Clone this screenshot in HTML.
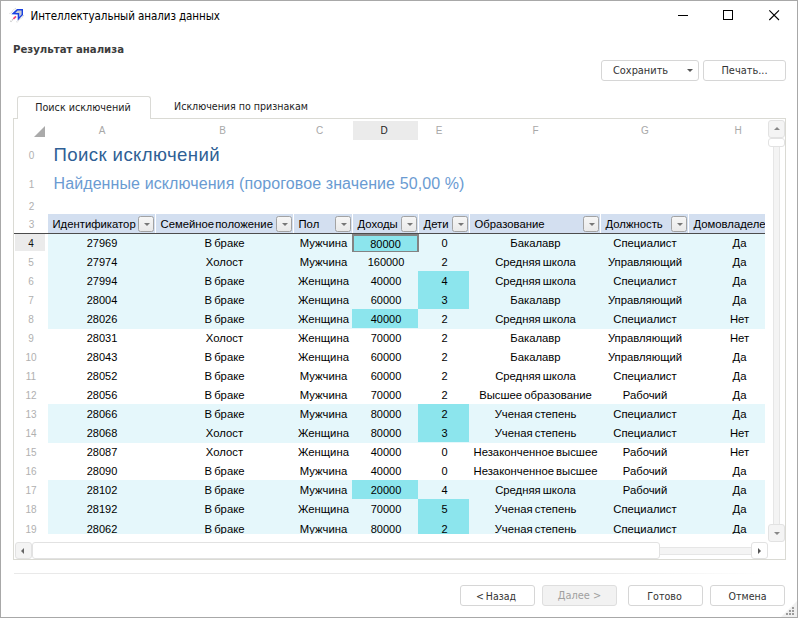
<!DOCTYPE html>
<html lang="ru"><head><meta charset="utf-8"><title>Интеллектуальный анализ данных</title>
<style>
*{box-sizing:border-box;margin:0;padding:0}
html,body{width:798px;height:618px;overflow:hidden;background:#fff}
body{font-family:"DejaVu Sans Condensed","Liberation Sans",sans-serif;font-size:11px;color:#222;position:relative}
#win{position:absolute;left:0;top:0;width:798px;height:618px;background:#fff}
#frame{position:absolute;left:0;top:0;width:798px;height:618px;border:1px solid #a8a8a8;z-index:10;pointer-events:none}
.abs{position:absolute}
#title{left:30.500px;top:9px;font-size:11.500px;letter-spacing:-0.080px;line-height:14px;color:#000;white-space:nowrap}
#sub{left:13px;top:43px;font-weight:bold;font-size:11.300px;color:#3c3c3c;white-space:nowrap}
.btn{position:absolute;height:21px;border:1px solid #d6d6d6;border-radius:3px;background:#fff;text-align:center;line-height:20.500px;font-size:10.900px;color:#333;white-space:nowrap}
.btn.dis{background:#f2f2f2;color:#a0a0a0;border-color:#dedede}
#tab1{left:17px;top:96px;width:134px;height:23px;border:1px solid #dadad6;border-bottom:none;border-radius:3px 3px 0 0;background:#fff;text-align:center;line-height:21px;z-index:3;font-size:10.700px;padding-right:2px}
#tab2{left:152px;top:96px;width:178px;height:22px;text-align:center;line-height:21px;font-size:10.550px}
#grid{left:13px;top:118px;width:773px;height:442px;border:1px solid #dadad4;background:#fff;overflow:hidden;font-family:"Liberation Sans",sans-serif}
#cells{position:absolute;left:0;top:0;width:751px;height:415px;overflow:hidden}
.ch{position:absolute;top:2px;height:19px;line-height:19px;text-align:center;color:#a8a8a8;font-size:10px}
.ch.dsel{background:#ebebeb;color:#222}
.rn{position:absolute;left:2px;width:31px;line-height:12px;text-align:center;color:#b0b0b0;font-size:10px}
.rw{position:absolute;left:0;width:751px;height:19px;line-height:21px;font-size:11px;color:#000}
.rw.hl::before{content:"";position:absolute;left:34px;right:0;top:0;bottom:-1px;background:#e5f7fb}
.rh{position:absolute;left:1px;width:30px;top:1px;height:17px;line-height:19px;padding-left:2px;text-align:center;color:#b0b0b0;font-size:10px}
.rh.sel{background:#ebebeb;color:#111}
.c{position:absolute;top:0;height:19px;text-align:center;white-space:nowrap;overflow:hidden}
.c.t{font-size:11.300px;word-spacing:-1px}
.c.b{padding-right:1px}
.c.h{padding-left:3px}
.c.st{background:#8ce5ed}
.c.cur{border:2px solid #838383;line-height:17px;top:1px}
.hc{position:absolute;top:95px;height:19px;line-height:21px;background:#d3dff0;font-size:11.300px;color:#000;white-space:nowrap;overflow:hidden;padding-left:4.500px;word-spacing:-2px}
.dd{position:absolute;right:1px;top:2px;width:16px;height:16px;border:1px solid #a3a3a3;border-radius:2.500px;background:linear-gradient(#f6f6f6,#e9e9e9)}
.dd::after{content:"";position:absolute;left:4.500px;top:6px;border:3px solid transparent;border-top:3.500px solid #777;border-bottom:none}
#t0{left:39.500px;top:24px;font-size:18.600px;letter-spacing:0.400px;line-height:24px;color:#2f5f95;white-space:nowrap}
#t1{left:39.500px;top:55px;font-size:16px;letter-spacing:0.100px;line-height:20px;color:#6a9bd2;white-space:nowrap}
.sb{position:absolute;border:1px solid #e2e2e2;border-radius:3px;background:#fff}
.sb.g{background:#f4f4f4}
.trk{position:absolute;background:#f4f4f4;border:1px solid #e6e6e6}
</style></head><body>
<div id="win"><div id="frame"></div>
<svg class="abs" style="left:8px;top:6px" width="18" height="18" viewBox="8 6 18 18"><path d="M11.300 14.300 L17 9 L23 9 L23 15 L17.700 20.700 L17.700 14.600 Z" fill="#1840e0"/><path d="M17.600 10.500 L21.600 10.500 L21.600 14.500 L19.200 17 L19.200 13 L15.200 13 Z" fill="#c9ccd6"/><path d="M16 16.300 L13.400 18.900" stroke="#ee3f78" stroke-width="1.700" fill="none"/><path d="M13 19.300 L10.300 22" stroke="#c4c4c4" stroke-width="1.400" stroke-dasharray="1.300 0.900" fill="none"/><path d="M9.600 13.800 L15.800 8.200 M16.600 22.200 L23.800 15.300" stroke="#d4d4d4" stroke-width="1.200" stroke-dasharray="1 0.800" fill="none"/></svg>
<div id="title" class="abs">Интеллектуальный анализ данных</div>
<svg class="abs" style="left:670px;top:5px" width="120" height="20" viewBox="670 5 120 20"><path d="M678 15.500H688" stroke="#000" stroke-width="1" fill="none"/><rect x="723.500" y="10.500" width="9" height="9" stroke="#000" fill="none"/><path d="M769.300 10.300 L779 20 M779 10.300 L769.300 20" stroke="#000" stroke-width="1.100" fill="none"/></svg>
<div id="sub" class="abs">Результат анализа</div>
<div class="btn" style="left:601px;top:60px;width:98px;text-align:left;padding-left:11px">Сохранить<i class="abs" style="right:5.500px;top:8px;border:3px solid transparent;border-top:3.500px solid #555;border-bottom:none"></i></div>
<div class="btn" style="left:703px;top:60px;width:83px">Печать...</div>
<div id="tab1" class="abs">Поиск исключений</div>
<div id="tab2" class="abs">Исключения по признакам</div>
<div id="grid" class="abs">
<div id="cells">
<svg class="abs" style="left:20px;top:7px" width="12" height="12"><path d="M0 11 L11 0 L11 11 Z" fill="#aaaaaa"/></svg>
<span class="ch" style="left:34px;width:108px">A</span><span class="ch" style="left:142px;width:138px;padding-right:5px">B</span><span class="ch" style="left:280px;width:59px;padding-right:8px">C</span><span class="ch dsel" style="left:339px;width:65px;padding-right:3px">D</span><span class="ch" style="left:405px;width:51px;padding-right:11px">E</span><span class="ch" style="left:456px;width:131px">F</span><span class="ch" style="left:587px;width:88px">G</span><span class="ch" style="left:675px;width:98px">H</span>
<span class="rn" style="top:31px">0</span>
<span class="rn" style="top:60px">1</span>
<span class="rn" style="top:82px">2</span>
<span class="rn" style="top:100px">3</span>
<div id="t0" class="abs">Поиск исключений</div>
<div id="t1" class="abs">Найденные исключения (пороговое значение 50,00 %)</div>
<span class="hc" style="left:34px;width:107px">Идентификатор<i class="dd"></i></span><span class="hc" style="left:142px;width:137px">Семейное положение<i class="dd"></i></span><span class="hc" style="left:280px;width:58px">Пол<i class="dd"></i></span><span class="hc" style="left:339px;width:65px">Доходы<i class="dd"></i></span><span class="hc" style="left:405px;width:50px">Дети<i class="dd"></i></span><span class="hc" style="left:456px;width:130px">Образование<i class="dd"></i></span><span class="hc" style="left:587px;width:87px">Должность<i class="dd"></i></span><span class="hc" style="left:675px;width:98px">Домовладелец</span>
<div class="rw hl" style="top:114px">
<span class="rh sel">4</span>
<span class="c" style="left:34px;width:108px">27969</span>
<span class="c t b" style="left:142px;width:138px">В браке</span>
<span class="c t" style="left:280px;width:59px">Мужчина</span>
<span class="c st cur" style="left:338px;width:67px">80000</span>
<span class="c" style="left:405px;width:51px">0</span>
<span class="c t" style="left:456px;width:131px">Бакалавр</span>
<span class="c t" style="left:587px;width:88px">Специалист</span>
<span class="c t h" style="left:675px;width:98px">Да</span>
</div>
<div class="rw hl" style="top:133px">
<span class="rh">5</span>
<span class="c" style="left:34px;width:108px">27974</span>
<span class="c t b" style="left:142px;width:138px">Холост</span>
<span class="c t" style="left:280px;width:59px">Мужчина</span>
<span class="c" style="left:339px;width:66px">160000</span>
<span class="c" style="left:405px;width:51px">2</span>
<span class="c t" style="left:456px;width:131px">Средняя школа</span>
<span class="c t" style="left:587px;width:88px">Управляющий</span>
<span class="c t h" style="left:675px;width:98px">Да</span>
</div>
<div class="rw hl" style="top:152px">
<span class="rh">6</span>
<span class="c" style="left:34px;width:108px">27994</span>
<span class="c t b" style="left:142px;width:138px">В браке</span>
<span class="c t" style="left:280px;width:59px">Женщина</span>
<span class="c" style="left:339px;width:66px">40000</span>
<span class="c st" style="left:404px;width:51px;padding-left:2px">4</span>
<span class="c t" style="left:456px;width:131px">Средняя школа</span>
<span class="c t" style="left:587px;width:88px">Специалист</span>
<span class="c t h" style="left:675px;width:98px">Да</span>
</div>
<div class="rw hl" style="top:171px">
<span class="rh">7</span>
<span class="c" style="left:34px;width:108px">28004</span>
<span class="c t b" style="left:142px;width:138px">В браке</span>
<span class="c t" style="left:280px;width:59px">Женщина</span>
<span class="c" style="left:339px;width:66px">60000</span>
<span class="c st" style="left:404px;width:51px;padding-left:2px">3</span>
<span class="c t" style="left:456px;width:131px">Бакалавр</span>
<span class="c t" style="left:587px;width:88px">Управляющий</span>
<span class="c t h" style="left:675px;width:98px">Да</span>
</div>
<div class="rw hl" style="top:190px">
<span class="rh">8</span>
<span class="c" style="left:34px;width:108px">28026</span>
<span class="c t b" style="left:142px;width:138px">В браке</span>
<span class="c t" style="left:280px;width:59px">Женщина</span>
<span class="c st" style="left:338px;width:66px;padding-left:2px">40000</span>
<span class="c" style="left:405px;width:51px">2</span>
<span class="c t" style="left:456px;width:131px">Средняя школа</span>
<span class="c t" style="left:587px;width:88px">Специалист</span>
<span class="c t h" style="left:675px;width:98px">Нет</span>
</div>
<div class="rw" style="top:209px">
<span class="rh">9</span>
<span class="c" style="left:34px;width:108px">28031</span>
<span class="c t b" style="left:142px;width:138px">Холост</span>
<span class="c t" style="left:280px;width:59px">Женщина</span>
<span class="c" style="left:339px;width:66px">70000</span>
<span class="c" style="left:405px;width:51px">2</span>
<span class="c t" style="left:456px;width:131px">Бакалавр</span>
<span class="c t" style="left:587px;width:88px">Управляющий</span>
<span class="c t h" style="left:675px;width:98px">Нет</span>
</div>
<div class="rw" style="top:228px">
<span class="rh">10</span>
<span class="c" style="left:34px;width:108px">28043</span>
<span class="c t b" style="left:142px;width:138px">В браке</span>
<span class="c t" style="left:280px;width:59px">Женщина</span>
<span class="c" style="left:339px;width:66px">60000</span>
<span class="c" style="left:405px;width:51px">2</span>
<span class="c t" style="left:456px;width:131px">Бакалавр</span>
<span class="c t" style="left:587px;width:88px">Управляющий</span>
<span class="c t h" style="left:675px;width:98px">Да</span>
</div>
<div class="rw" style="top:247px">
<span class="rh">11</span>
<span class="c" style="left:34px;width:108px">28052</span>
<span class="c t b" style="left:142px;width:138px">В браке</span>
<span class="c t" style="left:280px;width:59px">Мужчина</span>
<span class="c" style="left:339px;width:66px">60000</span>
<span class="c" style="left:405px;width:51px">2</span>
<span class="c t" style="left:456px;width:131px">Средняя школа</span>
<span class="c t" style="left:587px;width:88px">Специалист</span>
<span class="c t h" style="left:675px;width:98px">Да</span>
</div>
<div class="rw" style="top:266px">
<span class="rh">12</span>
<span class="c" style="left:34px;width:108px">28056</span>
<span class="c t b" style="left:142px;width:138px">В браке</span>
<span class="c t" style="left:280px;width:59px">Мужчина</span>
<span class="c" style="left:339px;width:66px">70000</span>
<span class="c" style="left:405px;width:51px">2</span>
<span class="c t" style="left:456px;width:131px">Высшее образование</span>
<span class="c t" style="left:587px;width:88px">Рабочий</span>
<span class="c t h" style="left:675px;width:98px">Да</span>
</div>
<div class="rw hl" style="top:285px">
<span class="rh">13</span>
<span class="c" style="left:34px;width:108px">28066</span>
<span class="c t b" style="left:142px;width:138px">В браке</span>
<span class="c t" style="left:280px;width:59px">Мужчина</span>
<span class="c" style="left:339px;width:66px">80000</span>
<span class="c st" style="left:404px;width:51px;padding-left:2px">2</span>
<span class="c t" style="left:456px;width:131px">Ученая степень</span>
<span class="c t" style="left:587px;width:88px">Специалист</span>
<span class="c t h" style="left:675px;width:98px">Да</span>
</div>
<div class="rw hl" style="top:304px">
<span class="rh">14</span>
<span class="c" style="left:34px;width:108px">28068</span>
<span class="c t b" style="left:142px;width:138px">Холост</span>
<span class="c t" style="left:280px;width:59px">Женщина</span>
<span class="c" style="left:339px;width:66px">80000</span>
<span class="c st" style="left:404px;width:51px;padding-left:2px">3</span>
<span class="c t" style="left:456px;width:131px">Ученая степень</span>
<span class="c t" style="left:587px;width:88px">Специалист</span>
<span class="c t h" style="left:675px;width:98px">Нет</span>
</div>
<div class="rw" style="top:323px">
<span class="rh">15</span>
<span class="c" style="left:34px;width:108px">28087</span>
<span class="c t b" style="left:142px;width:138px">Холост</span>
<span class="c t" style="left:280px;width:59px">Женщина</span>
<span class="c" style="left:339px;width:66px">40000</span>
<span class="c" style="left:405px;width:51px">0</span>
<span class="c t" style="left:456px;width:131px">Незаконченное высшее</span>
<span class="c t" style="left:587px;width:88px">Рабочий</span>
<span class="c t h" style="left:675px;width:98px">Нет</span>
</div>
<div class="rw" style="top:342px">
<span class="rh">16</span>
<span class="c" style="left:34px;width:108px">28090</span>
<span class="c t b" style="left:142px;width:138px">В браке</span>
<span class="c t" style="left:280px;width:59px">Мужчина</span>
<span class="c" style="left:339px;width:66px">40000</span>
<span class="c" style="left:405px;width:51px">0</span>
<span class="c t" style="left:456px;width:131px">Незаконченное высшее</span>
<span class="c t" style="left:587px;width:88px">Рабочий</span>
<span class="c t h" style="left:675px;width:98px">Да</span>
</div>
<div class="rw hl" style="top:361px">
<span class="rh">17</span>
<span class="c" style="left:34px;width:108px">28102</span>
<span class="c t b" style="left:142px;width:138px">В браке</span>
<span class="c t" style="left:280px;width:59px">Мужчина</span>
<span class="c st" style="left:338px;width:66px;padding-left:2px">20000</span>
<span class="c" style="left:405px;width:51px">4</span>
<span class="c t" style="left:456px;width:131px">Средняя школа</span>
<span class="c t" style="left:587px;width:88px">Рабочий</span>
<span class="c t h" style="left:675px;width:98px">Да</span>
</div>
<div class="rw hl" style="top:380px">
<span class="rh">18</span>
<span class="c" style="left:34px;width:108px">28192</span>
<span class="c t b" style="left:142px;width:138px">В браке</span>
<span class="c t" style="left:280px;width:59px">Женщина</span>
<span class="c" style="left:339px;width:66px">70000</span>
<span class="c st" style="left:404px;width:51px;padding-left:2px">5</span>
<span class="c t" style="left:456px;width:131px">Ученая степень</span>
<span class="c t" style="left:587px;width:88px">Специалист</span>
<span class="c t h" style="left:675px;width:98px">Да</span>
</div>
<div class="rw hl" style="top:399px;line-height:23px">
<span class="rh" style="line-height:21px">19</span>
<span class="c" style="left:34px;width:108px">28062</span>
<span class="c t b" style="left:142px;width:138px">В браке</span>
<span class="c t" style="left:280px;width:59px">Мужчина</span>
<span class="c" style="left:339px;width:66px">80000</span>
<span class="c st" style="left:404px;width:51px;padding-left:2px">2</span>
<span class="c t" style="left:456px;width:131px">Ученая степень</span>
<span class="c t" style="left:587px;width:88px">Специалист</span>
<span class="c t h" style="left:675px;width:98px">Да</span>
</div>
<div class="abs" style="left:0;top:114px;width:751px;height:1px;background:#4c4c4c"></div>
</div>
<div class="trk" style="left:759px;top:17px;width:7px;height:395px"></div>
<div class="sb g" style="left:754px;top:1px;width:17px;height:18px"><i class="abs" style="left:4.500px;top:6px;border:3px solid transparent;border-bottom:3.500px solid #888;border-top:none"></i></div>
<div class="sb" style="left:754px;top:19px;width:17px;height:9px"></div>
<div class="sb g" style="left:754px;top:405px;width:17px;height:18px"><i class="abs" style="left:4.500px;top:7px;border:3px solid transparent;border-top:3.500px solid #888;border-bottom:none"></i></div>
<div class="trk" style="left:16px;top:428px;width:725px;height:8px"></div>
<div class="sb g" style="left:1px;top:423px;width:17px;height:17px"><i class="abs" style="left:5px;top:4.500px;border:3px solid transparent;border-right:3.500px solid #666;border-left:none"></i></div>
<div class="sb" style="left:18px;top:423px;width:628px;height:17px"></div>
<div class="sb g" style="left:737px;top:423px;width:17px;height:17px;background:#fff"><i class="abs" style="left:5.500px;top:4.500px;border:3px solid transparent;border-left:3.500px solid #555;border-right:none"></i></div>
</div>
<div class="abs" style="left:14px;top:573px;width:766px;height:1px;background:linear-gradient(90deg,#e9e9e9 0%,#e9e9e9 75%,#fff 98%)"></div>
<div class="btn" style="left:460px;top:585px;width:75px;font-size:10.500px;word-spacing:-1px;padding-right:3px">&lt; Назад</div>
<div class="btn dis" style="left:542px;top:585px;width:75px">Далее &gt;</div>
<div class="btn" style="left:628px;top:585px;width:75px;font-size:10.600px;padding-right:2px">Готово</div>
<div class="btn" style="left:710px;top:585px;width:75px;font-size:10.500px">Отмена</div>
<svg class="abs" style="left:780px;top:600px" width="17" height="17" viewBox="780 600 17 17"><path d="M781 617 L797 601 L797 617 Z" fill="#f0f0f0"/><g fill="#9c9c9c"><rect x="792" y="607" width="2" height="2"/><rect x="789" y="610" width="2" height="2"/><rect x="792" y="610" width="2" height="2"/><rect x="786" y="613" width="2" height="2"/><rect x="789" y="613" width="2" height="2"/><rect x="792" y="613" width="2" height="2"/></g></svg>
</div>
</body></html>
